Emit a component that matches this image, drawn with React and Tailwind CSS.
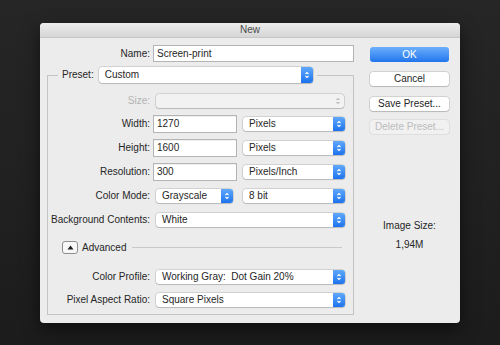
import React from "react";

function Stepper({ disabled }) {
  if (disabled) {
    return (
      <div className="flex h-full w-[12px] items-center justify-center">
        <svg width="6" height="10" viewBox="0 0 6 10" fill="none" stroke="#9a9a9a" strokeWidth="1">
          <path d="M1.5 4 L3 2.5 L4.5 4" />
          <path d="M1.5 6 L3 7.5 L4.5 6" />
        </svg>
      </div>
    );
  }
  return (
    <div className="flex h-full w-[12px] items-center justify-center rounded-r-[3px] bg-gradient-to-b from-[#5fa9fb] to-[#1a72ec]">
      <svg width="6" height="10" viewBox="0 0 6 10" fill="none" stroke="#ffffff" strokeWidth="1.1">
        <path d="M1.5 4 L3 2.5 L4.5 4" />
        <path d="M1.5 6 L3 7.5 L4.5 6" />
      </svg>
    </div>
  );
}

function Select({ value, className, disabled }) {
  return (
    <div
      className={
        "flex items-center rounded-[3px] shadow-[0_0_0_0.5px_rgba(0,0,0,0.22),0_1px_1px_rgba(0,0,0,0.12)] " +
        (disabled ? "bg-[#f2f2f2] " : "bg-white ") +
        className
      }
    >
      <span className="flex-1 truncate pl-[6px] text-[#262626]">{value}</span>
      <Stepper disabled={disabled} />
    </div>
  );
}

function Field({ value }) {
  return (
    <div className="ml-[3px] flex h-[18px] w-[84px] items-center border border-[#b4b4b4] bg-white pl-[3px] text-[#262626] shadow-[inset_0_1px_0_rgba(0,0,0,0.06)]">
      {value}
    </div>
  );
}

function Label({ children, muted }) {
  return (
    <div className={"w-[102px] text-right " + (muted ? "text-[#b3b3b3]" : "text-[#262626]")}>
      {children}
    </div>
  );
}

export default function App() {
  return (
    <div className="h-[345px] w-[500px] bg-gradient-to-b from-[#262626] to-[#1c1c1c] pl-[40px] pt-[23px] font-['Liberation_Sans',Arial,sans-serif] text-[10px] leading-none">
      <div className="w-[420px] rounded-[4px] bg-[#ececec] pb-[8px] shadow-[0_6px_18px_rgba(0,0,0,0.55)]">
        {/* title bar */}
        <div className="flex h-[15px] items-center justify-center rounded-t-[4px] border-b border-[#c6c6c6] bg-gradient-to-b from-[#ececec] to-[#d6d6d6] text-[#4a4a4a]">
          New
        </div>

        <div className="flex">
          {/* left side */}
          <div className="w-[315px] pt-[7px]">
            <div className="flex h-[17px] items-center">
              <div className="w-[110px] text-right text-[#262626]">Name:</div>
              <div className="ml-[3px] flex h-[17px] w-[201px] items-center border border-[#b4b4b4] bg-white pl-[3px] text-[#262626]">
                Screen-print
              </div>
            </div>

            <fieldset className="ml-[7px] mt-[5px] w-[307px] border border-[#c3c3c3] pb-[4px]">
              <legend className="ml-[10px] px-[4px]">
                <div className="flex items-center">
                  <span className="text-[#262626]">Preset:</span>
                  <Select value="Custom" className="ml-[5px] h-[16px] w-[214px]" />
                </div>
              </legend>

              <div className="mt-[7px] flex h-[22px] items-center">
                <Label muted>Size:</Label>
                <Select disabled value="" className="ml-[6px] h-[14px] w-[188px]" />
              </div>

              <div className="flex h-[23px] items-center">
                <Label>Width:</Label>
                <Field value="1270" />
                <Select value="Pixels" className="ml-[6px] h-[14px] w-[102px]" />
              </div>

              <div className="flex h-[25px] items-center">
                <Label>Height:</Label>
                <Field value="1600" />
                <Select value="Pixels" className="ml-[6px] h-[14px] w-[102px]" />
              </div>

              <div className="flex h-[24px] items-center">
                <Label>Resolution:</Label>
                <Field value="300" />
                <Select value="Pixels/Inch" className="ml-[6px] h-[14px] w-[102px]" />
              </div>

              <div className="flex h-[24px] items-center">
                <Label>Color Mode:</Label>
                <Select value="Grayscale" className="ml-[6px] h-[14px] w-[77px]" />
                <Select value="8 bit" className="ml-[10px] h-[14px] w-[102px]" />
              </div>

              <div className="flex h-[23px] items-center">
                <Label>Background Contents:</Label>
                <Select value="White" className="ml-[6px] h-[14px] w-[189px]" />
              </div>

              <div className="flex h-[33px] items-center">
                <div className="ml-[14px] flex h-[13px] w-[16px] items-center justify-center rounded-[3px] border border-[#8e8e8e] bg-[#f7f7f7]">
                  <svg width="7" height="5" viewBox="0 0 7 5">
                    <path d="M0.5 4.5 L3.5 0.5 L6.5 4.5 Z" fill="#1f1f1f" />
                  </svg>
                </div>
                <span className="ml-[4px] text-[#262626]">Advanced</span>
                <div className="ml-[6px] mr-[11px] h-px flex-1 bg-[#c9c9c9]" />
              </div>

              <div className="flex h-[25px] items-center">
                <Label>Color Profile:</Label>
                <Select value={"Working Gray:\u00a0 Dot Gain 20%"} className="ml-[6px] h-[14px] w-[189px]" />
              </div>

              <div className="flex h-[21px] items-center">
                <Label>Pixel Aspect Ratio:</Label>
                <Select value="Square Pixels" className="ml-[6px] h-[14px] w-[189px]" />
              </div>
            </fieldset>
          </div>

          {/* right side */}
          <div className="ml-[15px] flex w-[79px] flex-col pt-[9px]">
            <button className="h-[15px] rounded-[3px] bg-gradient-to-b from-[#6bb0fb] to-[#1f74ed] text-white">
              OK
            </button>
            <button className="mt-[10px] h-[14px] rounded-[3px] bg-white text-[#262626] shadow-[0_0_0_0.5px_rgba(0,0,0,0.22),0_1px_1px_rgba(0,0,0,0.12)]">
              Cancel
            </button>
            <button className="mt-[11px] h-[14px] rounded-[3px] bg-white text-[#262626] shadow-[0_0_0_0.5px_rgba(0,0,0,0.22),0_1px_1px_rgba(0,0,0,0.12)]">
              Save Preset...
            </button>
            <button className="mt-[9px] h-[14px] rounded-[3px] bg-[#f1f1f1] text-[#bcbcbc] shadow-[0_0_0_0.5px_rgba(0,0,0,0.12)]">
              Delete Preset...
            </button>

            <div className="mt-[87px] text-center text-[#262626]">Image Size:</div>
            <div className="mt-[9px] text-center text-[#262626]">1,94M</div>
          </div>
        </div>
      </div>
    </div>
  );
}
